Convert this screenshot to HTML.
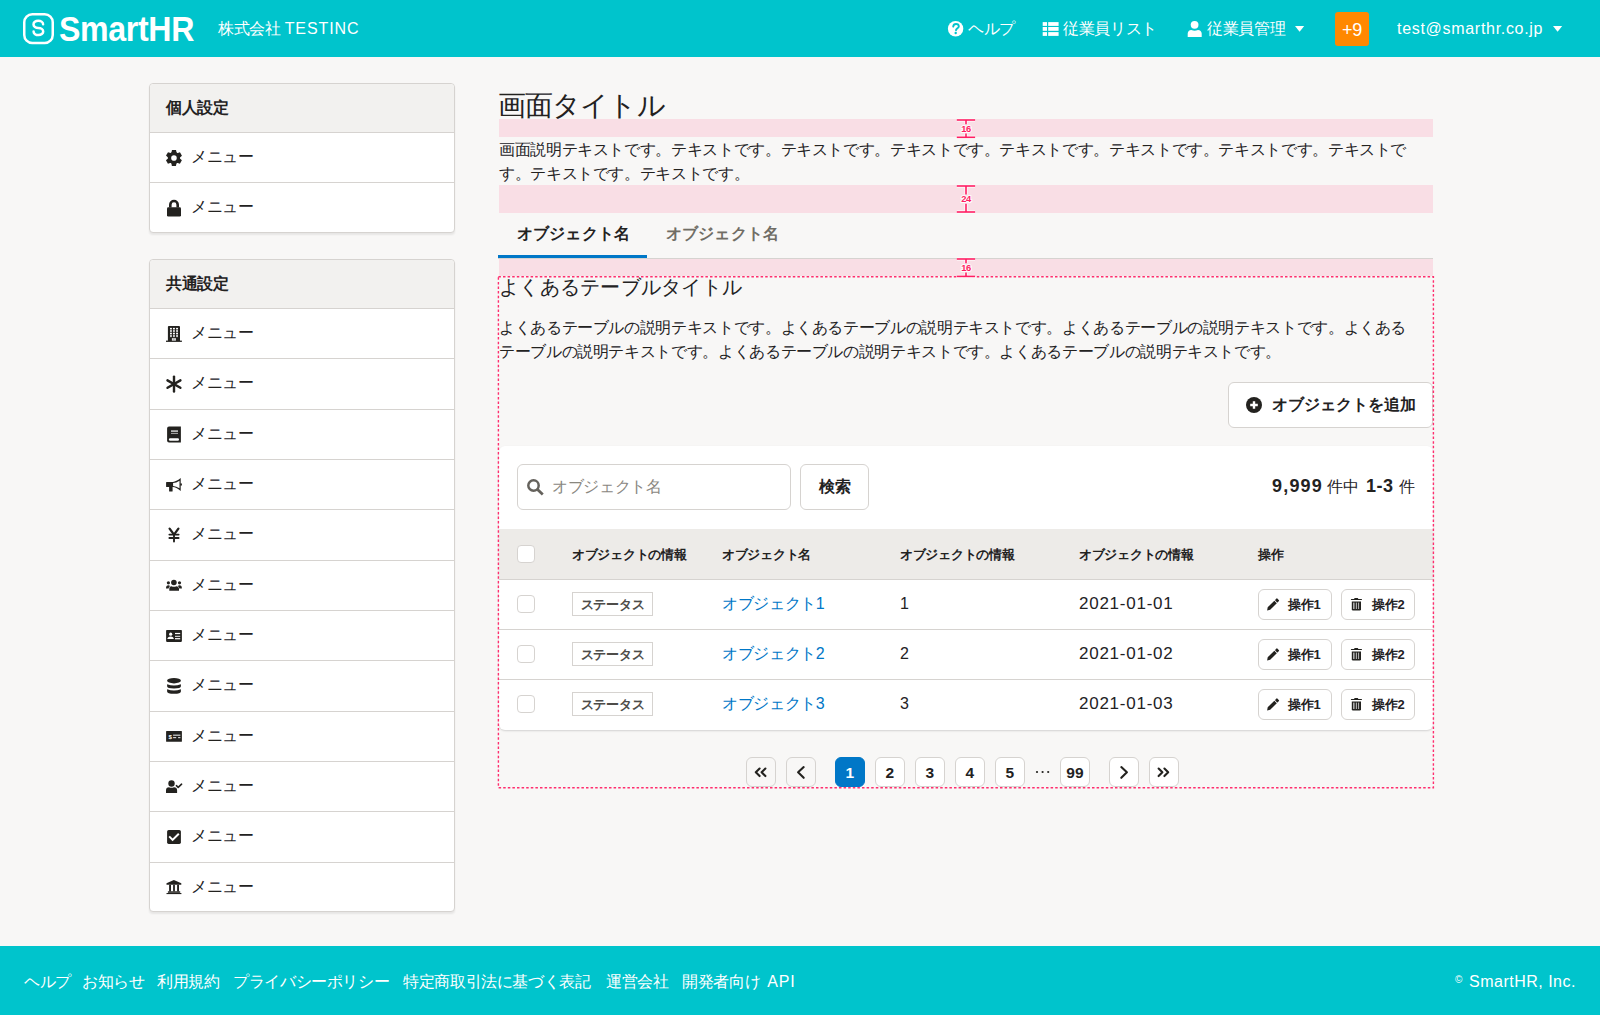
<!DOCTYPE html>
<html lang="ja"><head><meta charset="utf-8">
<style>
*{box-sizing:border-box;margin:0;padding:0}
html,body{width:1600px;height:1015px;overflow:hidden}
body{background:#F8F7F6;font-family:"Liberation Sans",sans-serif;color:#23221F;position:relative;font-size:16px;letter-spacing:-0.36px;line-height:1.5}
.abs{position:absolute;white-space:nowrap}
svg{display:block;position:absolute}
#hdr{left:0;top:0;width:1600px;height:57px;background:#00C4CC;color:#fff}
#ftr{left:0;top:946px;width:1600px;height:69px;background:#00C4CC;color:#fff}
.card{position:absolute;left:149px;width:306px;background:#fff;border:1px solid #D6D3D0;border-radius:4px;box-shadow:0 2px 2px rgba(0,0,0,.07)}
.card .ch{height:49px;background:#F2F1EF;border-bottom:1px solid #D6D3D0;font-weight:bold;font-size:16px;letter-spacing:-0.36px;line-height:48px;padding-left:16px;border-radius:4px 4px 0 0}
.card .row{height:50.33px;border-bottom:1px solid #D6D3D0;position:relative}
.card .row:last-child{border-bottom:none}
.card .row .tx{position:absolute;left:41px;top:12px;font-size:16px;letter-spacing:-0.36px;line-height:24px}
.pink{position:absolute;left:499px;width:934px;background:#F9DEE5}
.btn{position:absolute;background:#fff;border:1px solid #D6D3D0;border-radius:6px}
.cb{position:absolute;left:517px;width:18px;height:18px;background:#fff;border:1px solid #D6D3D0;border-radius:4px}
.th{position:absolute;top:545px;font-size:13px;letter-spacing:-0.29px;font-weight:bold;line-height:20px;white-space:nowrap}
.td{position:absolute;font-size:16px;letter-spacing:-0.36px;line-height:24px;white-space:nowrap}
.tag{position:absolute;left:572px;width:81px;height:24px;border:1px solid #D6D3D0;background:#fff;font-size:13px;letter-spacing:-0.29px;font-weight:bold;line-height:23px;text-align:center;color:#4E4C49}
.rline{position:absolute;left:499px;width:934px;height:1px;background:#D6D3D0}
.ab{position:absolute;height:31px;width:74px;background:#fff;border:1px solid #D6D3D0;border-radius:6px;font-size:13px;font-weight:bold;line-height:29px}
.pg{position:absolute;top:757px;width:30px;height:30px;background:#fff;border:1px solid #D6D3D0;border-radius:6px;font-size:15.5px;letter-spacing:0.2px;line-height:30px;text-align:center;font-weight:bold}
.fl{position:absolute;top:970px;font-size:16px;letter-spacing:-0.36px;line-height:24px;color:#fff;white-space:nowrap}
</style></head><body>
<div id="hdr" class="abs">
  <!-- logo -->
  <svg style="left:23px;top:13px" width="31" height="32" viewBox="0 0 31 32"><rect x="1.25" y="1.25" width="28.5" height="28.8" rx="8" fill="none" stroke="#fff" stroke-width="2.5"/><path d="M20.1 11.2 A4.8 3.6 0 1 0 15.35 14.9 A4.8 3.6 0 1 1 10.6 18.6" fill="none" stroke="#fff" stroke-width="2.5" stroke-linecap="round"/></svg>
  <svg style="left:59px;top:12px" width="140" height="34" viewBox="0 0 140 34">
    <text x="0" y="29" font-family="Liberation Sans" font-weight="bold" font-size="34.5" fill="#fff" textLength="135" lengthAdjust="spacingAndGlyphs">SmartHR</text>
  </svg>
  <div class="abs" style="left:218px;top:17px;font-size:16px;letter-spacing:-0.36px;line-height:24px;color:#fff">株式会社 <span style="letter-spacing:0.9px">TESTINC</span></div>
  <!-- help icon -->
  <svg style="left:944px;top:17px" width="24" height="24" viewBox="0 0 24 24">
    <circle cx="11.6" cy="11.8" r="7.7" fill="#fff"/>
    <path d="M9.2 9.6 C9.4 7.8 10.6 7 12 7 C13.6 7 14.8 8 14.8 9.4 C14.8 11.2 12.2 11.4 12 13.2" fill="none" stroke="#00C4CC" stroke-width="1.9" stroke-linecap="round"/>
    <circle cx="11.7" cy="16" r="1.2" fill="#00C4CC"/>
  </svg>
  <div class="abs" style="left:968px;top:17px;font-size:16px;letter-spacing:-0.36px;line-height:24px">ヘルプ</div>
  <svg style="left:1038px;top:17px" width="24" height="24" viewBox="0 0 24 24" fill="#fff">
    <rect x="4.7" y="5.1" width="4.3" height="3.8"/><rect x="10.2" y="5.1" width="10.4" height="3.8"/>
    <rect x="4.7" y="10" width="4.3" height="3.8"/><rect x="10.2" y="10" width="10.4" height="3.8"/>
    <rect x="4.7" y="15.1" width="4.3" height="3.8"/><rect x="10.2" y="15.1" width="10.4" height="3.8"/>
  </svg>
  <div class="abs" style="left:1063px;top:17px;font-size:16px;letter-spacing:-0.36px;line-height:24px">従業員リスト</div>
  <svg style="left:1183px;top:17px" width="24" height="24" viewBox="0 0 24 24" fill="#fff">
    <circle cx="11.6" cy="7.8" r="3.9"/>
    <path d="M4.7 19.9 V16.6 C4.7 14.5 6.2 12.9 8.2 12.9 C9.6 13.4 10.6 13.7 11.6 13.7 C12.6 13.7 13.6 13.4 15 12.9 C17.1 12.9 18.7 14.5 18.7 16.6 V19.9 Z"/>
  </svg>
  <div class="abs" style="left:1207px;top:17px;font-size:16px;letter-spacing:-0.36px;line-height:24px">従業員管理</div>
  <svg style="left:1288px;top:17px" width="24" height="24" viewBox="0 0 24 24"><path d="M7 9 H16.2 L11.6 14.7 Z" fill="#fff"/></svg>
  <div class="abs" style="left:1335px;top:12px;width:34px;height:34px;background:#FF8800;border-radius:3px;text-align:center;font-size:18px;line-height:36px;color:#fff">+9</div>
  <div class="abs" style="left:1397px;top:17px;font-size:16px;letter-spacing:-0.36px;line-height:24px;letter-spacing:0.7px">test@smarthr.co.jp</div>
  <svg style="left:1546px;top:17px" width="24" height="24" viewBox="0 0 24 24"><path d="M7 9 H16.2 L11.6 14.7 Z" fill="#fff"/></svg>
</div>

<div class="card" style="top:83px;height:150px">
  <div class="ch">個人設定</div>
  <div class="row"><div class="tx">メニュー</div></div>
  <div class="row"><div class="tx">メニュー</div></div>
</div>
<div class="card" style="top:259px;height:653px">
  <div class="ch">共通設定</div>
  <div class="row"><div class="tx">メニュー</div></div>
  <div class="row"><div class="tx">メニュー</div></div>
  <div class="row"><div class="tx">メニュー</div></div>
  <div class="row"><div class="tx">メニュー</div></div>
  <div class="row"><div class="tx">メニュー</div></div>
  <div class="row"><div class="tx">メニュー</div></div>
  <div class="row"><div class="tx">メニュー</div></div>
  <div class="row"><div class="tx">メニュー</div></div>
  <div class="row"><div class="tx">メニュー</div></div>
  <div class="row"><div class="tx">メニュー</div></div>
  <div class="row"><div class="tx">メニュー</div></div>
  <div class="row"><div class="tx">メニュー</div></div>
</div>
<!-- SIDEBAR ICONS -->
<div id="sicons">
<svg style="left:162px;top:146px" width="24" height="24" viewBox="0 0 24 24"><path d="M10 3.9 H14 L14.8 7.6 H9.2 Z" transform="rotate(0 11.95 11.95)" fill="#23221F"/><path d="M10 3.9 H14 L14.8 7.6 H9.2 Z" transform="rotate(60 11.95 11.95)" fill="#23221F"/><path d="M10 3.9 H14 L14.8 7.6 H9.2 Z" transform="rotate(120 11.95 11.95)" fill="#23221F"/><path d="M10 3.9 H14 L14.8 7.6 H9.2 Z" transform="rotate(180 11.95 11.95)" fill="#23221F"/><path d="M10 3.9 H14 L14.8 7.6 H9.2 Z" transform="rotate(240 11.95 11.95)" fill="#23221F"/><path d="M10 3.9 H14 L14.8 7.6 H9.2 Z" transform="rotate(300 11.95 11.95)" fill="#23221F"/><circle cx="11.95" cy="11.95" r="6.1" fill="#23221F"/><circle cx="11.95" cy="11.95" r="2.8" fill="#fff"/></svg>
<svg style="left:162px;top:196px" width="24" height="24" viewBox="0 0 24 24"><rect x="5" y="11.3" width="14" height="9.2" rx="1.3" fill="#23221F"/><path d="M8.3 11.6 V8.7 A3.7 3.7 0 0 1 15.7 8.7 V11.6" fill="none" stroke="#23221F" stroke-width="2.6"/></svg>
<svg style="left:162px;top:322px" width="24" height="24" viewBox="0 0 24 24"><path d="M5.9 19 V5 Q5.9 4 6.9 4 H17 Q18 4 18 5 V19 Z" fill="#23221F"/><rect x="4" y="18.6" width="15.9" height="1.3" fill="#23221F"/><rect x="8" y="5.9" width="1.9" height="1.1" fill="#fff" opacity="1"/><rect x="8" y="7.4" width="1.9" height="3" fill="#fff" opacity="0.75"/><rect x="8" y="11" width="1.9" height="1.1" fill="#fff" opacity="1"/><rect x="8" y="12.6" width="1.9" height="2.5" fill="#fff" opacity="0.75"/><rect x="11" y="5.9" width="1.9" height="1.1" fill="#fff" opacity="1"/><rect x="11" y="7.4" width="1.9" height="3" fill="#fff" opacity="0.75"/><rect x="11" y="11" width="1.9" height="1.1" fill="#fff" opacity="1"/><rect x="11" y="12.6" width="1.9" height="2.5" fill="#fff" opacity="0.75"/><rect x="14.1" y="5.9" width="1.9" height="1.1" fill="#fff" opacity="1"/><rect x="14.1" y="7.4" width="1.9" height="3" fill="#fff" opacity="0.75"/><rect x="14.1" y="11" width="1.9" height="1.1" fill="#fff" opacity="1"/><rect x="14.1" y="12.6" width="1.9" height="2.5" fill="#fff" opacity="0.75"/><rect x="9.9" y="16.1" width="4" height="2.6" fill="#fff" opacity=".85"/><rect x="11.4" y="16.1" width="1" height="2.6" fill="#999"/></svg>
<svg style="left:162px;top:372px" width="24" height="24" viewBox="0 0 24 24"><line x1="12" y1="4.6" x2="12" y2="19.5" stroke="#23221F" stroke-width="2.4" stroke-linecap="round" transform="rotate(0 11.95 12.05)"/><line x1="12" y1="4.6" x2="12" y2="19.5" stroke="#23221F" stroke-width="2.4" stroke-linecap="round" transform="rotate(60 11.95 12.05)"/><line x1="12" y1="4.6" x2="12" y2="19.5" stroke="#23221F" stroke-width="2.4" stroke-linecap="round" transform="rotate(120 11.95 12.05)"/></svg>
<svg style="left:162px;top:422px" width="24" height="24" viewBox="0 0 24 24"><path d="M7 4.5 H18.9 V20.6 H7 Q5.1 20.6 5.1 18.6 V6.5 Q5.1 4.5 7 4.5 Z" fill="#23221F"/><rect x="6.9" y="16.3" width="10.1" height="2.4" rx="1.2" fill="#fff"/><rect x="9" y="8.3" width="7" height="1.6" fill="#fff" opacity=".75"/><rect x="9" y="10.9" width="7" height="0.9" fill="#fff" opacity=".7"/></svg>
<svg style="left:162px;top:472px" width="24" height="24" viewBox="0 0 24 24"><path d="M4.1 10.4 Q4.1 9.9 4.6 9.9 H11 Q14 9.9 18.7 6.1 V18.9 Q14 15.1 11 15.1 H10.6 V19.1 Q10.6 19.6 10.1 19.6 H7.6 Q7.1 19.6 7.1 19.1 V15.1 H4.6 Q4.1 15.1 4.1 14.6 Z" fill="#23221F"/><path d="M11.1 11.1 Q14.2 10.8 17.5 8.7 V16.3 Q14.2 14.2 11.1 14 Z" fill="#fff"/><rect x="18.2" y="11.3" width="1.7" height="2.4" rx=".8" fill="#23221F"/></svg>
<svg style="left:162px;top:523px" width="24" height="24" viewBox="0 0 24 24"><path d="M7.6 5.6 L12 11.6 L16.4 5.6" fill="none" stroke="#23221F" stroke-width="2.3" stroke-linecap="round" stroke-linejoin="round"/><path d="M12 11.6 V18.6 M7.4 11.6 H16.6 M7.4 15 H16.6" fill="none" stroke="#23221F" stroke-width="1.9" stroke-linecap="round"/></svg>
<svg style="left:162px;top:573px" width="24" height="24" viewBox="0 0 24 24"><circle cx="11.9" cy="9.5" r="2.8" fill="#23221F"/><path d="M7.3 17.7 V15.4 Q7.3 13.2 9.5 13.2 Q10.7 13.8 11.9 13.8 Q13.1 13.8 14.3 13.2 Q16.6 13.2 17 15.4 V17.7 Z" fill="#23221F"/><circle cx="6.4" cy="9.8" r="1.6" fill="#23221F"/><circle cx="17.5" cy="9.8" r="1.6" fill="#23221F"/><path d="M4 15.4 Q4 12.4 6.4 12.3 Q7.4 12.3 8 12.9 Q6.8 13.9 6.6 15.6 Z" fill="#23221F"/><path d="M19.9 15.4 Q19.9 12.4 17.5 12.3 Q16.5 12.3 15.9 12.9 Q17.1 13.9 17.3 15.6 Z" fill="#23221F"/></svg>
<svg style="left:162px;top:623px" width="24" height="24" viewBox="0 0 24 24"><rect x="4.1" y="6.9" width="15.8" height="12" rx=".8" fill="#23221F"/><circle cx="8.7" cy="11.2" r="1.6" fill="#fff"/><path d="M5.3 16.1 Q5.6 13.6 8.7 13.6 Q11.6 13.6 11.8 16.1 Z" fill="#fff"/><rect x="13" y="9.9" width="5.2" height="1.2" fill="#fff"/><rect x="13" y="12.8" width="5.2" height="1.1" fill="#fff" opacity=".85"/><rect x="13" y="15.1" width="5.2" height="1.2" fill="#fff"/></svg>
<svg style="left:162px;top:673px" width="24" height="24" viewBox="0 0 24 24"><ellipse cx="12" cy="7.7" rx="6.9" ry="2.7" fill="#23221F"/><path d="M5.1 11.3 Q12 13.9 18.9 11.3 V13.3 Q18.9 15.5 12 15.5 Q5.1 15.5 5.1 13.3 Z" fill="#23221F"/><path d="M5.1 16.2 Q12 18.8 18.9 16.2 V18.5 Q18.9 20.8 12 20.8 Q5.1 20.8 5.1 18.5 Z" fill="#23221F"/></svg>
<svg style="left:162px;top:724px" width="24" height="24" viewBox="0 0 24 24"><rect x="4.1" y="6.9" width="15.8" height="10.8" rx=".5" fill="#23221F"/><text x="8.1" y="15" font-family="Liberation Sans" font-weight="bold" font-size="6.2" fill="#fff" text-anchor="middle">$</text><rect x="11.1" y="10.6" width="7.3" height="1.2" fill="#fff" opacity=".8"/><rect x="11.1" y="13" width="3.1" height="1.2" fill="#fff" opacity=".8"/><rect x="16.1" y="13" width="2.3" height="1.2" fill="#fff" opacity=".8"/></svg>
<svg style="left:162px;top:774px" width="24" height="24" viewBox="0 0 24 24"><circle cx="9.5" cy="9.5" r="3.2" fill="#23221F"/><path d="M4 18.9 V16.2 Q4 13.2 7 13.2 Q8.2 13.8 9.5 13.8 Q10.8 13.8 12 13.2 Q15.1 13.2 15.1 16.2 V18.9 Z" fill="#23221F"/><path d="M14.4 11.7 L16.2 13.3 L19.6 10.2" fill="none" stroke="#23221F" stroke-width="1.6" stroke-linecap="round" stroke-linejoin="round"/></svg>
<svg style="left:162px;top:824px" width="24" height="24" viewBox="0 0 24 24"><rect x="5.1" y="5.9" width="13.8" height="14" rx="1.6" fill="#23221F"/><path d="M7.9 13.1 L10.6 15.9 L16.1 10.4" fill="none" stroke="#fff" stroke-width="2" stroke-linecap="square"/></svg>
<svg style="left:162px;top:875px" width="24" height="24" viewBox="0 0 24 24"><path d="M11.9 5.1 L19.3 8.3 V9.7 H4.5 V8.3 Z" fill="#23221F"/><rect x="7.1" y="9.8" width="1.9" height="6.6" fill="#23221F"/><rect x="11.1" y="9.8" width="1.8" height="6.6" fill="#23221F"/><rect x="15.1" y="9.8" width="1.9" height="6.6" fill="#23221F"/><rect x="5.9" y="16.3" width="12.3" height="1.5" fill="#23221F"/><rect x="4.5" y="18" width="14.9" height="1.1" fill="#23221F"/></svg>
</div>

<!-- MAIN -->
<div class="abs" style="left:498px;top:88px;font-size:28px;letter-spacing:-0.9px;line-height:36px">画面タイトル</div>
<div class="pink" style="top:119px;height:18px"></div>
<div class="abs" style="left:499px;top:138px;width:915px;font-size:16px;letter-spacing:-0.36px;line-height:24px;white-space:normal">画面説明テキストです。テキストです。テキストです。テキストです。テキストです。テキストです。テキストです。テキストです。テキストです。テキストです。</div>
<div class="pink" style="top:185px;height:28px"></div>
<!-- tabs -->
<div class="abs" style="left:498px;top:258px;width:935px;height:1px;background:#D6D3D0"></div>
<div class="abs" style="left:498px;top:255px;width:149px;height:3px;background:#0077C7"></div>
<div class="abs" style="left:517px;top:222px;font-size:16px;letter-spacing:0.15px;font-weight:bold;line-height:24px">オブジェクト名</div>
<div class="abs" style="left:666px;top:222px;font-size:16px;letter-spacing:0.15px;font-weight:bold;line-height:24px;color:#706D65">オブジェクト名</div>
<div class="pink" style="top:259px;height:17px"></div>
<svg style="left:496px;top:274px;z-index:5" width="942" height="518" viewBox="0 0 942 518"><rect x="2.4" y="2.8" width="935" height="510.9" fill="none" stroke="#FF2E6E" stroke-width="1.4" stroke-dasharray="2.5 2.1"/></svg>

<svg style="left:950px;top:113.6px;z-index:6" width="32" height="29.30000000000001" viewBox="0 0 32 29.30000000000001"><g stroke="#fff" stroke-width="3.2" opacity=".9"><line x1="6.8" y1="6.0" x2="25.1" y2="6.0"/><line x1="6.8" y1="23.30000000000001" x2="25.1" y2="23.30000000000001"/><line x1="16" y1="6.0" x2="16" y2="10.300000000000006"/><line x1="16" y1="19.500000000000007" x2="16" y2="23.30000000000001"/></g><text x="16.1" y="18.200000000000006" text-anchor="middle" font-family="Liberation Sans" font-weight="bold" font-size="9.4" fill="#fff" stroke="#fff" stroke-width="2" opacity=".9" letter-spacing="-.3">16</text><g stroke="#FF1F63" stroke-width="1.6"><line x1="6.8" y1="6.0" x2="25.1" y2="6.0"/><line x1="6.8" y1="23.30000000000001" x2="25.1" y2="23.30000000000001"/><line x1="16" y1="6.0" x2="16" y2="10.300000000000006"/><line x1="16" y1="19.500000000000007" x2="16" y2="23.30000000000001"/></g><text x="16.1" y="18.200000000000006" text-anchor="middle" font-family="Liberation Sans" font-weight="bold" font-size="9.4" fill="#FF1F63" letter-spacing="-.3">16</text></svg><svg style="left:950px;top:180.1px;z-index:6" width="32" height="38.0" viewBox="0 0 32 38.0"><g stroke="#fff" stroke-width="3.2" opacity=".9"><line x1="6.8" y1="6.0" x2="25.1" y2="6.0"/><line x1="6.8" y1="32.0" x2="25.1" y2="32.0"/><line x1="16" y1="6.0" x2="16" y2="14.550000000000006"/><line x1="16" y1="23.750000000000007" x2="16" y2="32.0"/></g><text x="16.1" y="22.450000000000006" text-anchor="middle" font-family="Liberation Sans" font-weight="bold" font-size="9.4" fill="#fff" stroke="#fff" stroke-width="2" opacity=".9" letter-spacing="-.3">24</text><g stroke="#FF1F63" stroke-width="1.6"><line x1="6.8" y1="6.0" x2="25.1" y2="6.0"/><line x1="6.8" y1="32.0" x2="25.1" y2="32.0"/><line x1="16" y1="6.0" x2="16" y2="14.550000000000006"/><line x1="16" y1="23.750000000000007" x2="16" y2="32.0"/></g><text x="16.1" y="22.450000000000006" text-anchor="middle" font-family="Liberation Sans" font-weight="bold" font-size="9.4" fill="#FF1F63" letter-spacing="-.3">24</text></svg><svg style="left:950px;top:253px;z-index:6" width="32" height="29.399999999999977" viewBox="0 0 32 29.399999999999977"><g stroke="#fff" stroke-width="3.2" opacity=".9"><line x1="6.8" y1="6" x2="25.1" y2="6"/><line x1="6.8" y1="23.399999999999977" x2="25.1" y2="23.399999999999977"/><line x1="16" y1="6" x2="16" y2="10.199999999999955"/><line x1="16" y1="19.399999999999956" x2="16" y2="23.399999999999977"/></g><text x="16.1" y="18.099999999999955" text-anchor="middle" font-family="Liberation Sans" font-weight="bold" font-size="9.4" fill="#fff" stroke="#fff" stroke-width="2" opacity=".9" letter-spacing="-.3">16</text><g stroke="#FF1F63" stroke-width="1.6"><line x1="6.8" y1="6" x2="25.1" y2="6"/><line x1="6.8" y1="23.399999999999977" x2="25.1" y2="23.399999999999977"/><line x1="16" y1="6" x2="16" y2="10.199999999999955"/><line x1="16" y1="19.399999999999956" x2="16" y2="23.399999999999977"/></g><text x="16.1" y="18.099999999999955" text-anchor="middle" font-family="Liberation Sans" font-weight="bold" font-size="9.4" fill="#FF1F63" letter-spacing="-.3">16</text></svg>
<div class="abs" style="left:499px;top:273px;font-size:20px;letter-spacing:0.27px;line-height:28px">よくあるテーブルタイトル</div>
<div class="abs" style="left:499px;top:316px;width:915px;font-size:16px;letter-spacing:-0.36px;line-height:24px;white-space:normal;color:#23221F">よくあるテーブルの説明テキストです。よくあるテーブルの説明テキストです。よくあるテーブルの説明テキストです。よくあるテーブルの説明テキストです。よくあるテーブルの説明テキストです。よくあるテーブルの説明テキストです。</div>
<div class="btn" style="left:1228px;top:382px;width:205px;height:46px"></div>
<svg style="left:1246px;top:397px" width="16" height="16" viewBox="0 0 16 16"><circle cx="8" cy="8" r="8" fill="#23221F"/><path d="M8 4.2V11.8M4.2 8H11.8" stroke="#fff" stroke-width="2.4"/></svg>
<div class="abs" style="left:1272px;top:393px;font-size:16px;letter-spacing:-0.05px;font-weight:bold;line-height:24px">オブジェクトを追加</div>

<!-- table box -->
<div class="abs" style="left:499px;top:446px;width:934px;height:284px;background:#fff;border-radius:6px;box-shadow:0 1px 2px rgba(0,0,0,.15)"></div>
<div class="btn" style="left:517px;top:464px;width:274px;height:46px"></div>
<svg style="left:527px;top:479px" width="18" height="18" viewBox="0 0 18 18"><circle cx="6.5" cy="6.5" r="5.2" fill="none" stroke="#65625C" stroke-width="2.5"/><path d="M10.6 10.6 L14.8 14.6" stroke="#65625C" stroke-width="2.7" stroke-linecap="square"/></svg>
<div class="abs" style="left:552px;top:475px;font-size:16px;letter-spacing:-0.36px;line-height:24px;color:#8A877F">オブジェクト名</div>
<div class="btn" style="left:800px;top:464px;width:69px;height:46px"></div>
<div class="abs" style="left:819px;top:475px;font-size:16px;letter-spacing:-0.36px;font-weight:bold;line-height:24px">検索</div>
<div class="abs" style="left:1272px;top:474px;font-size:18px;font-weight:bold;letter-spacing:1.2px;line-height:24px">9,999</div><div class="abs" style="left:1327px;top:475px;font-size:16px;letter-spacing:-0.36px;line-height:24px">件中</div><div class="abs" style="left:1366px;top:474px;font-size:18px;font-weight:bold;letter-spacing:0.5px;line-height:24px">1-3</div><div class="abs" style="left:1399px;top:475px;font-size:16px;line-height:24px">件</div>

<div class="abs" style="left:499px;top:529px;width:934px;height:50px;background:#EDEBE8"></div>
<div class="rline" style="top:579px"></div>
<div class="rline" style="top:629px"></div>
<div class="rline" style="top:679px"></div>
<div class="cb" style="top:545px"></div>
<div class="th" style="left:572px">オブジェクトの情報</div>
<div class="th" style="left:722px">オブジェクト名</div>
<div class="th" style="left:900px">オブジェクトの情報</div>
<div class="th" style="left:1079px">オブジェクトの情報</div>
<div class="th" style="left:1258px">操作</div>

<div class="cb" style="top:595px"></div>
<div class="tag" style="top:592px">ステータス</div>
<div class="td" style="left:722px;top:592px;color:#0077C7">オブジェクト1</div>
<div class="td" style="left:900px;top:592px">1</div>
<div class="td" style="left:1079px;top:592px;font-size:17px;letter-spacing:0.75px">2021-01-01</div>

<div class="cb" style="top:645px"></div>
<div class="tag" style="top:642px">ステータス</div>
<div class="td" style="left:722px;top:642px;color:#0077C7">オブジェクト2</div>
<div class="td" style="left:900px;top:642px">2</div>
<div class="td" style="left:1079px;top:642px;font-size:17px;letter-spacing:0.75px">2021-01-02</div>

<div class="cb" style="top:695px"></div>
<div class="tag" style="top:692px">ステータス</div>
<div class="td" style="left:722px;top:692px;color:#0077C7">オブジェクト3</div>
<div class="td" style="left:900px;top:692px">3</div>
<div class="td" style="left:1079px;top:692px;font-size:17px;letter-spacing:0.75px">2021-01-03</div>

<div id="acts">
<div class="ab" style="left:1258px;top:589px"></div><div class="ab" style="left:1341px;top:589px"></div>
<svg style="left:1260px;top:592px" width="24" height="24" viewBox="0 0 24 24"><g transform="translate(7.1 18.4) rotate(-45)" fill="#23221F"><path d="M0 0 L2.6 -1.75 H12 V1.75 H2.6 Z"/><rect x="12.7" y="-1.75" width="2.9" height="3.5" rx=".6"/></g></svg>
<svg style="left:1344px;top:592px" width="24" height="24" viewBox="0 0 24 24"><rect x="6.9" y="6.9" width="11.1" height="1.2" rx=".5" fill="#23221F"/><rect x="10.2" y="5.9" width="4" height="1.5" rx=".6" fill="#23221F"/><path d="M7.8 9.5 H17 V17.2 Q17 18.4 15.8 18.4 H9 Q7.8 18.4 7.8 17.2 Z" fill="#23221F"/><rect x="9" y="10.6" width="1.6" height="6.4" fill="#aaa"/><rect x="11.8" y="10.6" width="1.2" height="6.4" fill="#aaa"/><rect x="14" y="10.6" width="1.1" height="6.4" fill="#aaa"/></svg>
<div class="abs" style="left:1288px;top:594px;font-size:13px;letter-spacing:-0.29px;font-weight:bold;line-height:22px">操作1</div>
<div class="abs" style="left:1372px;top:594px;font-size:13px;letter-spacing:-0.29px;font-weight:bold;line-height:22px">操作2</div>
<div class="ab" style="left:1258px;top:639px"></div><div class="ab" style="left:1341px;top:639px"></div>
<svg style="left:1260px;top:642px" width="24" height="24" viewBox="0 0 24 24"><g transform="translate(7.1 18.4) rotate(-45)" fill="#23221F"><path d="M0 0 L2.6 -1.75 H12 V1.75 H2.6 Z"/><rect x="12.7" y="-1.75" width="2.9" height="3.5" rx=".6"/></g></svg>
<svg style="left:1344px;top:642px" width="24" height="24" viewBox="0 0 24 24"><rect x="6.9" y="6.9" width="11.1" height="1.2" rx=".5" fill="#23221F"/><rect x="10.2" y="5.9" width="4" height="1.5" rx=".6" fill="#23221F"/><path d="M7.8 9.5 H17 V17.2 Q17 18.4 15.8 18.4 H9 Q7.8 18.4 7.8 17.2 Z" fill="#23221F"/><rect x="9" y="10.6" width="1.6" height="6.4" fill="#aaa"/><rect x="11.8" y="10.6" width="1.2" height="6.4" fill="#aaa"/><rect x="14" y="10.6" width="1.1" height="6.4" fill="#aaa"/></svg>
<div class="abs" style="left:1288px;top:644px;font-size:13px;letter-spacing:-0.29px;font-weight:bold;line-height:22px">操作1</div>
<div class="abs" style="left:1372px;top:644px;font-size:13px;letter-spacing:-0.29px;font-weight:bold;line-height:22px">操作2</div>
<div class="ab" style="left:1258px;top:689px"></div><div class="ab" style="left:1341px;top:689px"></div>
<svg style="left:1260px;top:692px" width="24" height="24" viewBox="0 0 24 24"><g transform="translate(7.1 18.4) rotate(-45)" fill="#23221F"><path d="M0 0 L2.6 -1.75 H12 V1.75 H2.6 Z"/><rect x="12.7" y="-1.75" width="2.9" height="3.5" rx=".6"/></g></svg>
<svg style="left:1344px;top:692px" width="24" height="24" viewBox="0 0 24 24"><rect x="6.9" y="6.9" width="11.1" height="1.2" rx=".5" fill="#23221F"/><rect x="10.2" y="5.9" width="4" height="1.5" rx=".6" fill="#23221F"/><path d="M7.8 9.5 H17 V17.2 Q17 18.4 15.8 18.4 H9 Q7.8 18.4 7.8 17.2 Z" fill="#23221F"/><rect x="9" y="10.6" width="1.6" height="6.4" fill="#aaa"/><rect x="11.8" y="10.6" width="1.2" height="6.4" fill="#aaa"/><rect x="14" y="10.6" width="1.1" height="6.4" fill="#aaa"/></svg>
<div class="abs" style="left:1288px;top:694px;font-size:13px;letter-spacing:-0.29px;font-weight:bold;line-height:22px">操作1</div>
<div class="abs" style="left:1372px;top:694px;font-size:13px;letter-spacing:-0.29px;font-weight:bold;line-height:22px">操作2</div>
</div>

<!-- pagination -->
<div class="pg" style="left:746px;background:#F8F7F6"></div>
<div class="pg" style="left:786px;background:#F8F7F6"></div>
<div class="pg" style="left:835px;background:#0077C7;border-color:#0077C7;color:#fff">1</div>
<div class="pg" style="left:875px">2</div>
<div class="pg" style="left:915px">3</div>
<div class="pg" style="left:955px">4</div>
<div class="pg" style="left:995px">5</div>
<svg style="left:1034px;top:765px" width="18" height="14" viewBox="0 0 18 14"><circle cx="3" cy="7" r="1.1" fill="#23221F"/><circle cx="8.6" cy="7" r="1.1" fill="#23221F"/><circle cx="14.2" cy="7" r="1.1" fill="#23221F"/></svg>
<div class="pg" style="left:1060px;width:30px">99</div>
<div class="pg" style="left:1109px"></div>
<div class="pg" style="left:1149px"></div>

<svg style="left:748px;top:760px" width="24" height="24" viewBox="0 0 24 24"><path d="M11.6 8.5 L7.8 12.3 L11.6 16.1 M17.4 8.5 L13.6 12.3 L17.4 16.1" fill="none" stroke="#23221F" stroke-width="2.1" stroke-linecap="round" stroke-linejoin="round"/></svg>
<svg style="left:789px;top:760px" width="24" height="24" viewBox="0 0 24 24"><path d="M14.7 7.1 L9.1 12.3 L14.7 17.8" fill="none" stroke="#23221F" stroke-width="2.1" stroke-linecap="round" stroke-linejoin="round"/></svg>
<svg style="left:1112px;top:760px" width="24" height="24" viewBox="0 0 24 24"><path d="M9.3 7.1 L14.9 12.3 L9.3 17.8" fill="none" stroke="#23221F" stroke-width="2.1" stroke-linecap="round" stroke-linejoin="round"/></svg>
<svg style="left:1152px;top:760px" width="24" height="24" viewBox="0 0 24 24"><path d="M6.6 8.5 L10.4 12.3 L6.6 16.1 M12.4 8.5 L16.2 12.3 L12.4 16.1" fill="none" stroke="#23221F" stroke-width="2.1" stroke-linecap="round" stroke-linejoin="round"/></svg>
<div id="ftr" class="abs"></div>
<div class="fl" style="left:24px">ヘルプ</div>
<div class="fl" style="left:82px">お知らせ</div>
<div class="fl" style="left:157px">利用規約</div>
<div class="fl" style="left:233px">プライバシーポリシー</div>
<div class="fl" style="left:403px">特定商取引法に基づく表記</div>
<div class="fl" style="left:606px">運営会社</div>
<div class="fl" style="left:682px">開発者向け<span style="letter-spacing:0.9px;margin-left:7px">API</span></div>
<div class="fl" style="left:1455px;top:968px;font-size:10px">©</div><div class="fl" style="left:1469px;letter-spacing:0.5px">SmartHR, Inc.</div>
</body></html>
